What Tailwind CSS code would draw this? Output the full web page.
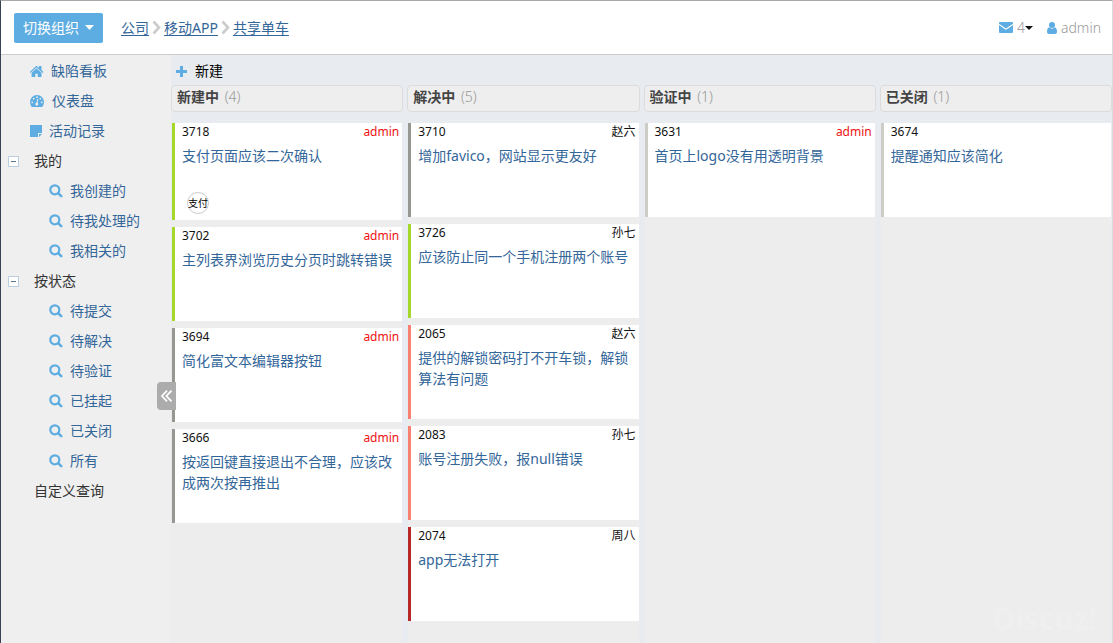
<!DOCTYPE html>
<html lang="zh-CN">
<head>
<meta charset="utf-8">
<title>缺陷看板</title>
<script src="https://cdn.jsdelivr.net/npm/@tailwindcss/browser@4"></script>
</head>
<body class="flex min-h-screen flex-col border-t border-r border-l border-t-[#aaaaaa] border-r-[#dcdcdc] border-l-[#3a4252] bg-[#e8ebf0] font-['Noto_Sans','Noto_Sans_CJK_SC',sans-serif] text-sm text-[#333333]">
<svg class="hidden" aria-hidden="true">
  <symbol id="search" viewBox="0 0 14 14"><circle cx="5.800" cy="5.800" r="4.500" fill="none" stroke="currentColor" stroke-width="2.200"/><path d="M9.200 9.200l3 3" stroke="currentColor" stroke-width="2.600" stroke-linecap="round"/></symbol>
  <symbol id="chevron" viewBox="0 0 9 15"><path d="M1.500 1.500l5.500 6-5.500 6" fill="none" stroke="currentColor" stroke-width="2.600"/></symbol>
  <symbol id="minus" viewBox="0 0 11 11"><path d="M.5.5h10v10H.5z" fill="#fff" stroke="#b9cde0"/><path d="M3 5.500h5" stroke="#5f7488"/></symbol>
</svg>

<header class="flex h-[54px] items-center border-b border-[#cccccc] bg-white px-3">
  <button class="ml-px flex h-[30px] items-center gap-1.5 rounded-xs bg-[#5dade2] pr-[9px] pl-[9px] text-white">切换组织
    <svg class="h-[5px] w-[9px]" viewBox="0 0 9 5" fill="currentColor"><path d="M0 0h9L4.500 5z"/></svg>
  </button>
  <nav class="ml-[18px] flex items-center text-[#336699]" aria-label="路径">
    <a href="#" class="underline underline-offset-2">公司</a>
    <svg class="mx-[3px] h-[15px] w-[9px] text-[#cccccc]"><use href="#chevron"/></svg>
    <a href="#" class="underline underline-offset-2">移动APP</a>
    <svg class="mx-[3px] h-[15px] w-[9px] text-[#cccccc]"><use href="#chevron"/></svg>
    <a href="#" class="underline underline-offset-2">共享单车</a>
  </nav>
  <div class="-mr-px ml-auto flex items-center gap-3.5 text-[#999999]">
    <button class="flex items-center" aria-label="消息 4">
      <svg class="mr-1 h-[11px] w-3.5" viewBox="0 0 14 11" fill="#5dade2"><path d="M1 0h12q1 0 1 1v.8L7 6.500 0 1.800V1q0-1 1-1z"/><path d="M0 3l6.300 4.400q.7.4 1.400 0L14 3v7q0 1-1 1H1q-1 0-1-1z"/></svg>
      <span class="font-light">4</span><svg class="h-1 w-2" viewBox="0 0 8 4" fill="#111"><path d="M0 0h8L4 4z"/></svg>
    </button>
    <a href="#" class="flex items-center gap-1 font-light">
      <svg class="h-3 w-2.5" viewBox="0 0 10 12" fill="#5dade2"><circle cx="5" cy="3" r="3"/><path d="M2.200 5.300Q5 8 7.800 5.300 10 6 10 10q0 2-2 2H2q-2 0-2-2 0-4 2.200-4.700z"/></svg>admin</a>
  </div>
</header>

<div class="relative flex grow">
  <aside class="w-[170px] shrink-0 bg-[#efefef] pt-px leading-[30px] text-[#336699]">
    <nav aria-label="缺陷">
      <a href="#" class="flex items-center gap-[7px] pl-[29px]"><svg class="h-3 w-3.5" viewBox="0 0 14 12" fill="#5dade2"><path d="M6.500.8L9 3V1h2.500v4L13.500 7l-.8 1L6.500 2.600.4 8l-.7-1z"/><path d="M6.500 3.500L11.500 7.800V12H7.800V8.700H5.300V12H1.600V7.800z"/></svg>缺陷看板</a>
      <a href="#" class="flex items-center gap-2 pl-[29px]"><svg class="h-3 w-3.5" viewBox="0 0 14 12"><path d="M7 0a7 7 0 0 1 7 7q0 2.500-1.200 4.300-.4.700-1.100.7H2.300q-.7 0-1.100-.7Q0 9.500 0 7a7 7 0 0 1 7-7z" fill="#5dade2"/><g fill="#efefef"><circle cx="2.200" cy="7.300" r=".9"/><circle cx="3.700" cy="3.700" r=".9"/><circle cx="7" cy="2.200" r=".9"/><circle cx="10.300" cy="3.700" r=".9"/><circle cx="11.800" cy="7.300" r=".9"/><circle cx="6.800" cy="9" r="1.500"/></g><path d="M6.800 9l1-5" stroke="#efefef"/></svg>仪表盘</a>
      <a href="#" class="flex items-center gap-[7px] pl-[29px]"><svg class="h-3 w-3" viewBox="0 0 12 12"><path d="M0 0h12v8H8v4H0z" fill="#5dade2"/><path d="M9 9h3l-3 3z" fill="#5dade2"/></svg>活动记录</a>

      <div class="flex items-center gap-[15px] pl-[7px] text-[#333333]"><button class="flex" aria-label="折叠 我的"><svg class="h-[11px] w-[11px]"><use href="#minus"/></svg></button>我的</div>
      <a href="#" class="flex items-center gap-[7px] pl-12"><svg class="h-3.5 w-3.5 text-[#5dade2]"><use href="#search"/></svg>我创建的</a>
      <a href="#" class="flex items-center gap-[7px] pl-12"><svg class="h-3.5 w-3.5 text-[#5dade2]"><use href="#search"/></svg>待我处理的</a>
      <a href="#" class="flex items-center gap-[7px] pl-12"><svg class="h-3.5 w-3.5 text-[#5dade2]"><use href="#search"/></svg>我相关的</a>

      <div class="flex items-center gap-[15px] pl-[7px] text-[#333333]"><button class="flex" aria-label="折叠 按状态"><svg class="h-[11px] w-[11px]"><use href="#minus"/></svg></button>按状态</div>
      <a href="#" class="flex items-center gap-[7px] pl-12"><svg class="h-3.5 w-3.5 text-[#5dade2]"><use href="#search"/></svg>待提交</a>
      <a href="#" class="flex items-center gap-[7px] pl-12"><svg class="h-3.5 w-3.5 text-[#5dade2]"><use href="#search"/></svg>待解决</a>
      <a href="#" class="flex items-center gap-[7px] pl-12"><svg class="h-3.5 w-3.5 text-[#5dade2]"><use href="#search"/></svg>待验证</a>
      <a href="#" class="flex items-center gap-[7px] pl-12"><svg class="h-3.5 w-3.5 text-[#5dade2]"><use href="#search"/></svg>已挂起</a>
      <a href="#" class="flex items-center gap-[7px] pl-12"><svg class="h-3.5 w-3.5 text-[#5dade2]"><use href="#search"/></svg>已关闭</a>
      <a href="#" class="flex items-center gap-[7px] pl-12"><svg class="h-3.5 w-3.5 text-[#5dade2]"><use href="#search"/></svg>所有</a>
      <div class="pl-[33px] text-[#333333]">自定义查询</div>
    </nav>
  </aside>
  <button class="absolute top-[327px] left-[156px] flex h-7 w-[19px] items-center justify-center rounded-l-sm bg-[#acacac]" aria-label="收起侧栏">
    <svg class="h-3 w-[11px]" viewBox="0 0 11 12" fill="none" stroke="#fff" stroke-width="1.800"><path d="M6 .7L.9 6 6 11.300M10.500.7L5.400 6l5.100 5.300"/></svg>
  </button>

  <main class="flex min-w-0 grow flex-col">
    <div class="flex h-[30px] items-center">
      <button class="flex items-center gap-2 pt-0.5 pl-[5px] text-black"><svg class="h-[11px] w-[11px]" viewBox="0 0 11 11" fill="#5dade2"><path d="M4 0h3v4h4v3H7v4H4V7H0V4h4z"/></svg>新建</button>
    </div>
    <div class="grid grow grid-cols-4 gap-x-1">
      <section class="flex flex-col">
        <h2 class="h-[27px] rounded-sm border border-[#dcdcdc] bg-[#eeeeee] px-[5px] leading-[22px] font-light text-[#999999]"><b class="mr-0.5 font-bold text-[#444444]">新建中</b> (4)</h2>
        <div class="mx-px mt-[11px] flex grow flex-col gap-[7px] bg-[#ededed]">
          <article class="min-h-[94px] border-l-3 border-[#a6d82c] bg-white pr-[3px] pl-[7px]">
            <div class="flex justify-between text-xs leading-[18px] text-[#111111]"><span>3718</span><span class="text-[#ee1111]">admin</span></div>
            <a href="#" class="mt-1 block leading-[21px] text-[#336699]">支付页面应该二次确认</a>
            <span class="mt-[26px] mb-1.5 ml-[5px] flex h-[22px] w-[22px] items-center justify-center rounded-full border border-[#cccccc] text-[10px] whitespace-nowrap text-black">支付</span>
          </article>
          <article class="min-h-[94px] border-l-3 border-[#a6d82c] bg-white pr-[3px] pl-[7px]">
            <div class="flex justify-between text-xs leading-[18px] text-[#111111]"><span>3702</span><span class="text-[#ee1111]">admin</span></div>
            <a href="#" class="mt-1 block leading-[21px] text-[#336699]">主列表界浏览历史分页时跳转错误</a>
          </article>
          <article class="min-h-[94px] border-l-3 border-[#979792] bg-white pr-[3px] pl-[7px]">
            <div class="flex justify-between text-xs leading-[18px] text-[#111111]"><span>3694</span><span class="text-[#ee1111]">admin</span></div>
            <a href="#" class="mt-1 block leading-[21px] text-[#336699]">简化富文本编辑器按钮</a>
          </article>
          <article class="min-h-[94px] border-l-3 border-[#979792] bg-white pr-[3px] pl-[7px]">
            <div class="flex justify-between text-xs leading-[18px] text-[#111111]"><span>3666</span><span class="text-[#ee1111]">admin</span></div>
            <a href="#" class="mt-1 block leading-[21px] text-[#336699]">按返回键直接退出不合理，应该改成两次按再推出</a>
          </article>
        </div>
      </section>
      <section class="flex flex-col">
        <h2 class="h-[27px] rounded-sm border border-[#dcdcdc] bg-[#eeeeee] px-[5px] leading-[22px] font-light text-[#999999]"><b class="mr-0.5 font-bold text-[#444444]">解决中</b> (5)</h2>
        <div class="mx-px mt-[11px] flex grow flex-col gap-[7px] bg-[#ededed]">
          <article class="min-h-[94px] border-l-3 border-[#979792] bg-white pr-[3px] pl-[7px]">
            <div class="flex justify-between text-xs leading-[18px] text-[#111111]"><span>3710</span><span>赵六</span></div>
            <a href="#" class="mt-1 block leading-[21px] text-[#336699]">增加favico，网站显示更友好</a>
          </article>
          <article class="min-h-[94px] border-l-3 border-[#a6d82c] bg-white pr-[3px] pl-[7px]">
            <div class="flex justify-between text-xs leading-[18px] text-[#111111]"><span>3726</span><span>孙七</span></div>
            <a href="#" class="mt-1 block leading-[21px] text-[#336699]">应该防止同一个手机注册两个账号</a>
          </article>
          <article class="min-h-[94px] border-l-3 border-[#fa8072] bg-white pr-[3px] pl-[7px]">
            <div class="flex justify-between text-xs leading-[18px] text-[#111111]"><span>2065</span><span>赵六</span></div>
            <a href="#" class="mt-1 block leading-[21px] text-[#336699]">提供的解锁密码打不开车锁，解锁算法有问题</a>
          </article>
          <article class="min-h-[94px] border-l-3 border-[#fa8072] bg-white pr-[3px] pl-[7px]">
            <div class="flex justify-between text-xs leading-[18px] text-[#111111]"><span>2083</span><span>孙七</span></div>
            <a href="#" class="mt-1 block leading-[21px] text-[#336699]">账号注册失败，报null错误</a>
          </article>
          <article class="min-h-[94px] border-l-3 border-[#b92828] bg-white pr-[3px] pl-[7px]">
            <div class="flex justify-between text-xs leading-[18px] text-[#111111]"><span>2074</span><span>周八</span></div>
            <a href="#" class="mt-1 block leading-[21px] text-[#336699]">app无法打开</a>
          </article>
        </div>
      </section>
      <section class="flex flex-col">
        <h2 class="h-[27px] rounded-sm border border-[#dcdcdc] bg-[#eeeeee] px-[5px] leading-[22px] font-light text-[#999999]"><b class="mr-0.5 font-bold text-[#444444]">验证中</b> (1)</h2>
        <div class="mx-px mt-[11px] flex grow flex-col gap-[7px] bg-[#ededed]">
          <article class="min-h-[94px] border-l-3 border-[#cdcdc8] bg-white pr-[3px] pl-[7px]">
            <div class="flex justify-between text-xs leading-[18px] text-[#111111]"><span>3631</span><span class="text-[#ee1111]">admin</span></div>
            <a href="#" class="mt-1 block leading-[21px] text-[#336699]">首页上logo没有用透明背景</a>
          </article>
        </div>
      </section>
      <section class="flex flex-col">
        <h2 class="h-[27px] rounded-sm border border-[#dcdcdc] bg-[#eeeeee] px-[5px] leading-[22px] font-light text-[#999999]"><b class="mr-0.5 font-bold text-[#444444]">已关闭</b> (1)</h2>
        <div class="mx-px mt-[11px] flex grow flex-col gap-[7px] bg-[#ededed]">
          <article class="min-h-[94px] border-l-3 border-[#cdcdc8] bg-white pr-[3px] pl-[7px]">
            <div class="flex justify-between text-xs leading-[18px] text-[#111111]"><span>3674</span></div>
            <a href="#" class="mt-1 block leading-[21px] text-[#336699]">提醒通知应该简化</a>
          </article>
          <div class="mt-auto mr-3.5 mb-1.5 text-right text-3xl font-bold text-[#efefef]">Discuz!</div>
        </div>
      </section>
    </div>
  </main>
</div>
</body>
</html>
